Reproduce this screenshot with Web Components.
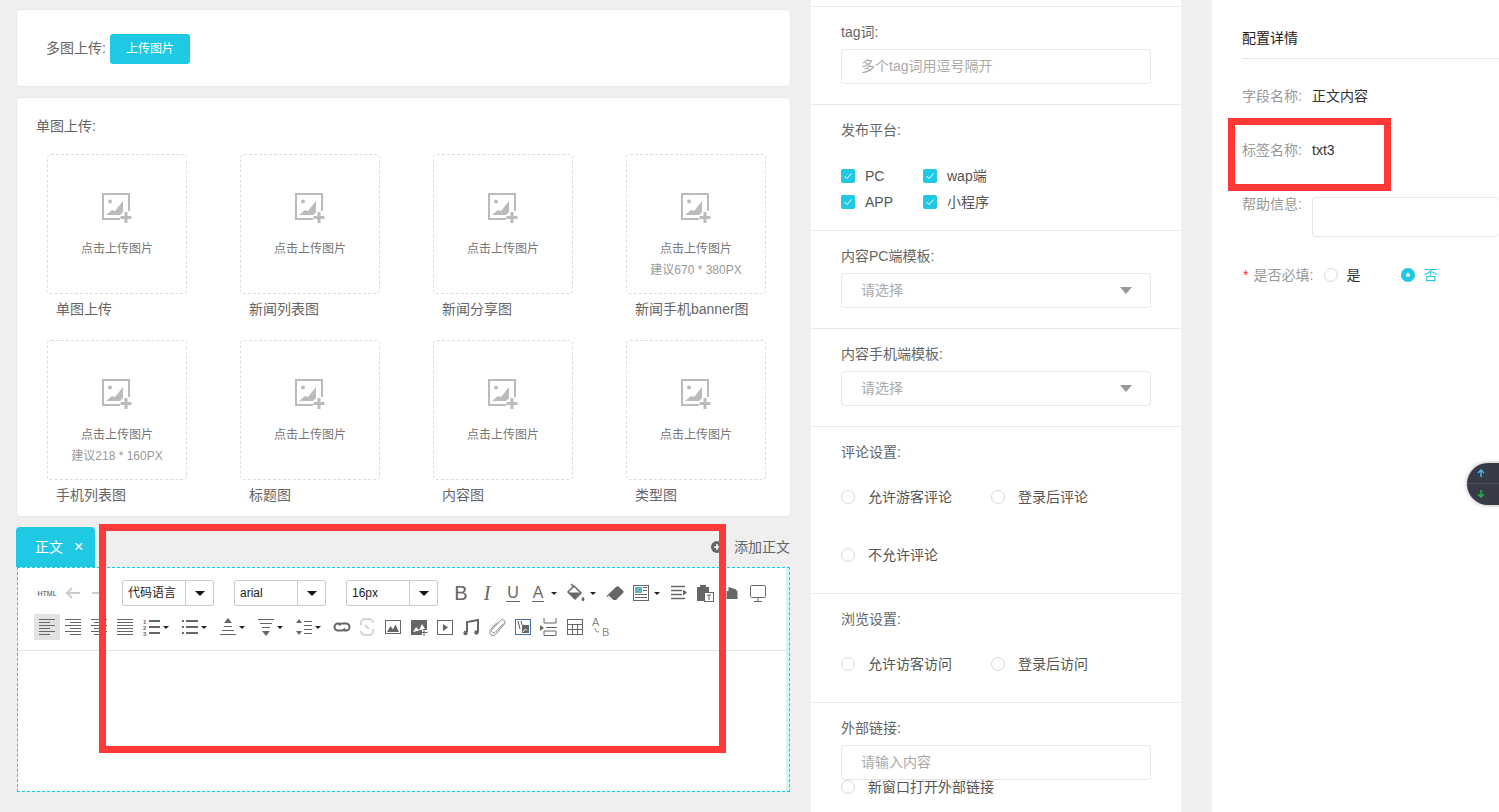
<!DOCTYPE html>
<html lang="zh">
<head>
<meta charset="utf-8">
<title>内容配置</title>
<style>
  html, body { margin: 0; padding: 0; height: 812px; overflow: hidden; background: #efefef; }
  body { font-family: "Liberation Sans", "Noto Sans CJK SC", sans-serif; font-size: 14px; color: #666; }
</style>
</head>
<body>
<app-shell></app-shell>

<script>
const TEAL = "#1fc8e3";

// toolbar icons, 20x20 box
const l = (y, a, b) => `<path d="M${a} ${y}H${b}"/>`;
const ICONS = {
  back: `<path d="M17 10H4M9 5l-5 5 5 5" stroke="#ccc" stroke-width="2"/>`,
  forward: `<path d="M3 10h13M11 5l5 5-5 5" stroke="#ccc" stroke-width="2"/>`,
  fill: `<path d="M5 1l3 3" stroke-width="1.5"/><path d="M8 3l7 7-6 6-7-7z" stroke-width="1.5"/><path d="M2.500 9.500h12l-5.500 6z" fill="#666" stroke="none"/><path d="M17 13.500c1 1.500 1.500 2.200 1.500 3a1.500 1.500 0 0 1-3 0c0-.8.500-1.500 1.500-3z" fill="#666" stroke="none"/>`,
  eraser: `<path d="M1.500 13l9.500-9c1-1 2-1 3 0l4 3.500c.8.800.8 1.700 0 2.500L11 17H6z" fill="#666" stroke="none"/><path d="M3.500 12.500l5 4.500H6l-3.500-3.200z" fill="#fff" stroke="none"/>`,
  imagetext: `<rect x="2.500" y="2.500" width="15" height="15"/><rect x="4" y="4" width="7" height="6" fill="#5fb8bf" stroke="none"/>${l(4.5,12,16)}${l(7.5,12,16)}${l(11.5,4,16)}${l(14.5,4,16)}`,
  rowtext: `<g stroke-width="1.500">${l(3.5,2,16)}${l(7.5,2,13)}${l(11.5,2,13)}${l(15.5,2,16)}</g><path d="M14 6.500l4 3-4 3z" fill="#666" stroke="none"/>`,
  paste: `<path d="M2 4h3V2h6v2h3v6H9v8H2z" fill="#666" stroke="none"/><rect x="9.500" y="9.500" width="9" height="9" fill="#fff"/><path d="M12 12h4M14 12v5"/>`,
  cut: `<path d="M4.500 8h11v8h-11z" fill="#666" stroke="none"/><path d="M6.500 4l8 2.500V8h-8z" fill="#666" stroke="none"/>`,
  monitor: `<rect x="2.500" y="2.500" width="15" height="12" rx="1"/><path d="M10 15v3M6 18.500h8"/>`,
  left: `${l(2.5,2,18)}${l(5.5,2,13)}${l(8.5,2,18)}${l(11.5,2,13)}${l(14.5,2,18)}${l(17.5,2,13)}`,
  right: `${l(2.5,2,18)}${l(5.5,7,18)}${l(8.5,2,18)}${l(11.5,7,18)}${l(14.5,2,18)}${l(17.5,7,18)}`,
  center: `${l(2.5,2,18)}${l(5.5,5,15)}${l(8.5,2,18)}${l(11.5,5,15)}${l(14.5,2,18)}${l(17.5,5,15)}`,
  justify: `${l(2.5,2,18)}${l(5.5,2,18)}${l(8.5,2,18)}${l(11.5,2,18)}${l(14.5,2,18)}${l(17.5,2,18)}`,
  ol: `<text x="1" y="7" font-size="6" font-weight="700" fill="#666" stroke="none">1</text><text x="1" y="13" font-size="6" font-weight="700" fill="#666" stroke="none">2</text><text x="1" y="19" font-size="6" font-weight="700" fill="#666" stroke="none">3</text><g stroke-width="2">${l(4,7,18)}${l(10,7,18)}${l(16,7,18)}</g>`,
  ul: `<g stroke-width="2">${l(4,2,4)}${l(10,2,4)}${l(16,2,4)}${l(4,6,18)}${l(10,6,18)}${l(16,6,18)}</g>`,
  spaceup: `<path d="M10 1l4 5H6z" fill="#666" stroke="none"/>${l(9.5,6,14)}${l(13.5,4,16)}${l(17.5,2,18)}`,
  spacedown: `${l(2.5,2,18)}${l(6.5,4,16)}${l(10.5,6,14)}<path d="M10 19l4-5H6z" fill="#666" stroke="none"/>`,
  lineheight: `<path d="M5 2l3 4H2zM5 18l3-4H2z" fill="#666" stroke="none"/>${l(4.5,10,18)}${l(8.5,10,18)}${l(12.5,10,18)}${l(16.5,10,18)}`,
  link: `<g stroke-width="2"><path d="M8 6.500H6a3.500 3.500 0 0 0 0 7h4c1.500 0 2.500-.8 3-2"/><path d="M12 13.500h2a3.500 3.500 0 0 0 0-7h-4c-1.500 0-2.500.8-3 2"/></g>`,
  unlink: `<g stroke="#d4d4d4" stroke-width="2"><path d="M4 8V6a4 4 0 0 1 4-4h4a4 4 0 0 1 4 4"/><path d="M16 12v2a4 4 0 0 1-4 4H8a4 4 0 0 1-4-4"/><path d="M8 8l4 4"/></g>`,
  image: `<rect x="2.500" y="3.500" width="15" height="13"/><path d="M4 15l3.500-6 2.500 3.500 2.500-5 3.500 7.500z" fill="#666" stroke="none"/>`,
  imageadd: `<path d="M2 3h16v10h-5v5H2z" fill="#666" stroke="none"/><path d="M4 15l3-5 3 3 3-6 3 5" fill="#fff" stroke="none"/><path d="M15 12v7M11.500 15.500h7"/>`,
  video: `<rect x="2.500" y="3.500" width="15" height="14"/><path d="M8 7l5 3.500-5 3.500z" fill="#666" stroke="none"/>`,
  music: `<path d="M6 15V5l11-2v12" stroke-width="2"/><circle cx="4.500" cy="16" r="2.200" fill="#666" stroke="none"/><circle cx="15.500" cy="15.500" r="2.200" fill="#666" stroke="none"/>`,
  clip: `<path d="M16.500 6.500L8 15.500c-1.500 1.500-4.500-1-3-3l8.500-9c2.500-2.500 6 1 4 3.500L8.500 17.500c-3 3-8-1.500-5-5L10 5.500" stroke="#888"/>`,
  gallery: `<rect x="2.500" y="2.500" width="15" height="15" stroke="#3f6fae"/><path d="M5 4l2 8M8 4l1 4"  stroke="#555"/><path d="M9 8h7v8H9z" fill="#666" stroke="none"/><path d="M10 15l2.500-3 1.500 1.500" stroke="#fff" fill="none"/>`,
  pagebreak: `<path d="M5 1v5h12V1"/><path d="M1 8l4 3-4 3z" fill="#666" stroke="none"/>${l(10.5,7,18)}<path d="M5 18.500v-4.500h12v4.500z"/>`,
  table: `<rect x="2.500" y="2.500" width="15" height="15"/><path d="M2.500 7.500h15M2.500 12.500h15M7.500 7.500v10M12.500 7.500v10"/>`,
  translate: `<text x="1" y="9" font-size="11" fill="#888" stroke="none">A</text><text x="11" y="19" font-size="11" fill="#888" stroke="none">B</text><path d="M4 11c0 3 1.500 4 4 4" stroke="#888"/>`
};

class ToolBtn extends HTMLElement {
  constructor() {
    super();
    this.attachShadow({ mode: "open" });
  }

  connectedCallback() {
    const w = this.getAttribute("w") || 26;
    const iw = this.getAttribute("iw") || w;
    const pl = this.getAttribute("pl") || 0;
    const cm = this.getAttribute("cm") || -1;
    const icon = ICONS[this.getAttribute("icon")];
    const caret = this.hasAttribute("caret")
      ? `<i class="caret" style="margin-left:${cm}px"></i>` : "";
    this.shadowRoot.innerHTML = `
      <style>
        :host { display: flex; align-items: center; height: 26px; flex: none; }
        :host([active]) { background: #e2e2e2; }
        .ico { display: flex; align-items: center; justify-content: center; height: 26px; flex: none; }
        svg { display: block; fill: none; stroke: #666; stroke-width: 1; font-family: "Liberation Sans", sans-serif; }
        .caret { flex: none; width: 0; height: 0; margin-top: 1px; border: 3px solid transparent; border-bottom: 0; border-top-color: #222; }
      </style>
      <div class="ico" style="width:${iw}px;margin-left:${pl}px">
        ${icon ? `<svg width="20" height="20" viewBox="0 0 20 20">${icon}</svg>` : "<slot></slot>"}
      </div>
      ${caret}
    `;
    this.style.width = w + "px";
  }
}

class EdSelect extends HTMLElement {
  constructor() {
    super();
    this.attachShadow({ mode: "open" });
    this.shadowRoot.innerHTML = `
      <style>
        :host { display: flex; width: 92px; height: 26px; box-sizing: border-box; border: 1px solid #ccc; border-radius: 2px; flex: none; background: #fff; }
        .val { flex: 1; padding-left: 5px; font-size: 12px; line-height: 24px; color: #222; white-space: nowrap; overflow: hidden; }
        .arrow { width: 27px; border-left: 1px solid #ccc; display: flex; align-items: center; justify-content: center; }
        .arrow i { width: 0; height: 0; border: 5px solid transparent; border-bottom: 0; border-top: 5px solid #111; }
      </style>
      <div class="val"><slot></slot></div>
      <div class="arrow"><i></i></div>
    `;
  }
}

class EditorBox extends HTMLElement {
  constructor() {
    super();
    this.attachShadow({ mode: "open" });
    this.shadowRoot.innerHTML = `
      <style>
        :host { display: block; height: 225px; margin-left: 1px; width: 773px; box-sizing: border-box; border: 1px dashed ${TEAL}; background: #d6f4f8; }
        .inner { background: #fff; height: 100%; margin-right: 3px; box-sizing: border-box; border-bottom-right-radius: 4px; }
        .bar { padding: 12px 0 10px 16px; border-bottom: 1px solid #e4e4e4; }
        .row { display: flex; align-items: center; height: 26px; }
        .row + .row { margin-top: 8px; }
        .html { font-size: 7px; color: #444; }
        .mr20 { margin-right: 20px; }
        .ml10 { margin-left: 10px; }
        .txt { font-size: 20px; color: #666; line-height: 26px; }
        .u { font-size: 16px; line-height: 16px; border-bottom: 1px solid #666; padding: 0 1px; }
        ed-select:first-of-type { margin-left: 10px; }
      </style>
      <div class="inner">
        <div class="bar">
          <div class="row">
            <tool-btn><span class="html">HTML</span></tool-btn>
            <tool-btn icon="back"></tool-btn>
            <tool-btn icon="forward"></tool-btn>
            <ed-select class="mr20">代码语言</ed-select>
            <ed-select class="mr20">arial</ed-select>
            <ed-select>16px</ed-select>
            <tool-btn class="ml10"><span class="txt">B</span></tool-btn>
            <tool-btn><span class="txt" style="font-family:'Liberation Serif',serif;font-style:italic">I</span></tool-btn>
            <tool-btn><span class="u">U</span></tool-btn>
            <tool-btn w="37" iw="24" cm="1" caret><span class="u">A</span></tool-btn>
            <tool-btn icon="fill" w="39" iw="26" cm="1" caret></tool-btn>
            <tool-btn icon="eraser"></tool-btn>
            <tool-btn icon="imagetext" w="37" iw="26" cm="0" caret></tool-btn>
            <tool-btn icon="rowtext" w="27"></tool-btn>
            <tool-btn icon="paste"></tool-btn>
            <tool-btn icon="cut" w="27"></tool-btn>
            <tool-btn icon="monitor"></tool-btn>
          </div>
          <div class="row">
            <tool-btn icon="left" active></tool-btn>
            <tool-btn icon="right"></tool-btn>
            <tool-btn icon="center"></tool-btn>
            <tool-btn icon="justify"></tool-btn>
            <tool-btn icon="ol" w="39" iw="24" pl="2" caret></tool-btn>
            <tool-btn icon="ul" w="39" iw="24" pl="1" caret></tool-btn>
            <tool-btn icon="spaceup" w="38" iw="24" caret></tool-btn>
            <tool-btn icon="spacedown" w="38" iw="24" caret></tool-btn>
            <tool-btn icon="lineheight" w="37" iw="24" caret></tool-btn>
            <tool-btn icon="link" w="25"></tool-btn>
            <tool-btn icon="unlink"></tool-btn>
            <tool-btn icon="image"></tool-btn>
            <tool-btn icon="imageadd"></tool-btn>
            <tool-btn icon="video"></tool-btn>
            <tool-btn icon="music"></tool-btn>
            <tool-btn icon="clip"></tool-btn>
            <tool-btn icon="gallery"></tool-btn>
            <tool-btn icon="pagebreak"></tool-btn>
            <tool-btn icon="table"></tool-btn>
            <tool-btn icon="translate"></tool-btn>
          </div>
        </div>
      </div>
    `;
  }
}

class UploadTile extends HTMLElement {
  constructor() {
    super();
    this.attachShadow({ mode: "open" });
  }

  connectedCallback() {
    const hint = this.getAttribute("hint");
    this.shadowRoot.innerHTML = `
      <style>
        :host { display: block; width: 193px; }
        .box { width: 140px; height: 140px; box-sizing: border-box; border: 1px dashed #ddd; border-radius: 4px; padding-top: 38px; display: flex; flex-direction: column; align-items: center; }
        svg { display: block; }
        .txt { margin-top: 17px; font-size: 12px; line-height: 18px; color: #777; }
        .hint { margin-top: 3px; font-size: 12px; line-height: 18px; color: #999; }
        .cap { margin: 5px 0 0 9px; font-size: 14px; line-height: 20px; color: #666; white-space: nowrap; }
      </style>
      <div class="box">
        <svg width="30" height="30" viewBox="0 0 30 30">
          <path d="M18 26H1V1h26v17" fill="none" stroke="#bbb" stroke-width="2"/>
          <circle cx="8" cy="8.500" r="2" fill="#bbb"/>
          <path d="M4 22l6-5 3 1 8-10v11l-3 3z" fill="#bbb"/>
          <path d="M24 19v11M18.500 24.500h11" stroke="#bbb" stroke-width="3"/>
        </svg>
        <div class="txt">点击上传图片</div>
        ${hint ? `<div class="hint">${hint}</div>` : ""}
      </div>
      <div class="cap"><slot></slot></div>
    `;
  }
}

class UiCard extends HTMLElement {
  constructor() {
    super();
    this.attachShadow({ mode: "open" });
    this.shadowRoot.innerHTML = `
      <style>
        :host { display: block; box-sizing: border-box; background: #fff; border: 1px solid #e8e8e8; border-radius: 4px; }
      </style>
      <slot></slot>
    `;
  }
}

class FormSection extends HTMLElement {
  constructor() {
    super();
    this.attachShadow({ mode: "open" });
  }

  connectedCallback() {
    this.shadowRoot.innerHTML = `
      <style>
        :host { display: block; box-sizing: border-box; height: ${this.getAttribute("h")}px; border-top: 1px solid #e8e8e8; padding: 15px 30px 0; }
        .lab { font-size: 14px; line-height: 20px; color: #666; white-space: nowrap; }
      </style>
      <div class="lab">${this.getAttribute("label")}</div>
      <slot></slot>
    `;
  }
}

class FakeInput extends HTMLElement {
  constructor() {
    super();
    this.attachShadow({ mode: "open" });
  }

  connectedCallback() {
    const arrow = this.hasAttribute("select") ? "<i></i>" : "";
    this.shadowRoot.innerHTML = `
      <style>
        :host { display: flex; align-items: center; justify-content: space-between; box-sizing: border-box; width: 310px; height: 35px; margin-top: 7px; padding: 0 18px 2px 19px; border: 1px solid #e6e6e6; border-radius: 4px; font-size: 14px; line-height: 20px; color: #aaa; background: #fff; }
        span { display: block; }
        i { width: 0; height: 0; margin-top: 2px; border: 6px solid transparent; border-bottom: 0; border-top: 7px solid #999; }
      </style>
      <span><slot></slot></span>${arrow}
    `;
  }
}

class CheckOpt extends HTMLElement {
  constructor() {
    super();
    this.attachShadow({ mode: "open" });
    this.shadowRoot.innerHTML = `
      <style>
        :host { display: flex; align-items: center; width: 82px; height: 26px; font-size: 14px; line-height: 20px; color: #555; white-space: nowrap; }
        .box { width: 14px; height: 14px; border-radius: 2px; background: ${TEAL}; margin-right: 10px; flex: none; }
        svg { display: block; }
      </style>
      <div class="box"><svg width="14" height="14" viewBox="0 0 14 14"><path d="M3.500 7l2.500 2.500 4.500-5" fill="none" stroke="#fff"/></svg></div>
      <slot></slot>
    `;
  }
}

class RadioOpt extends HTMLElement {
  constructor() {
    super();
    this.attachShadow({ mode: "open" });
    this.shadowRoot.innerHTML = `
      <style>
        :host { display: inline-flex; align-items: center; width: var(--w, 150px); height: 20px; font-size: 14px; line-height: 20px; color: var(--c, #555); white-space: nowrap; }
        :host([checked]) { color: ${TEAL}; }
        .dot { box-sizing: border-box; width: 14px; height: 14px; margin-left: var(--ml, 0); margin-right: var(--gap, 13px); border-radius: 50%; border: 1px solid #d8d8de; background: #fff; flex: none; }
        :host([checked]) .dot { border: 5px solid ${TEAL}; }
      </style>
      <div class="dot"></div>
      <slot></slot>
    `;
  }
}

class DetailRow extends HTMLElement {
  constructor() {
    super();
    this.attachShadow({ mode: "open" });
  }

  connectedCallback() {
    this.shadowRoot.innerHTML = `
      <style>
        :host { display: flex; align-items: flex-start; font-size: 14px; line-height: 20px; color: #333; margin-top: var(--mt, 0); }
        .k { width: 70px; flex: none; color: #999; white-space: nowrap; }
      </style>
      <div class="k">${this.getAttribute("label")}</div>
      <slot></slot>
    `;
  }
}

// red annotation frames drawn over the shot
class MarkBox extends HTMLElement {
  constructor() {
    super();
    this.attachShadow({ mode: "open" });
    this.shadowRoot.innerHTML = `
      <style>
        :host { display: block; position: absolute; box-sizing: border-box; border: 7px solid #ff3838; pointer-events: none; }
      </style>
    `;
  }
}

class ScrollDock extends HTMLElement {
  constructor() {
    super();
    this.attachShadow({ mode: "open" });
    this.shadowRoot.innerHTML = `
      <style>
        :host { display: block; position: absolute; left: 1467px; top: 463px; width: 40px; height: 42px; box-sizing: border-box; background: #363b46; border-radius: 21px 0 0 21px; box-shadow: 0 0 4px rgba(0,0,0,.35); }
        svg { display: block; }
        .line { height: 1px; background: #4b505b; }
        .cell { height: 20px; padding-left: 10px; display: flex; align-items: center; }
      </style>
      <div class="cell"><svg width="8" height="8" viewBox="0 0 8 8"><path d="M4 8V1M1 4l3-3 3 3" fill="none" stroke="#4db2f0" stroke-width="1.500"/></svg></div>
      <div class="line"></div>
      <div class="cell"><svg width="8" height="8" viewBox="0 0 8 8"><path d="M4 0v7M1 4l3 3 3-3" fill="none" stroke="#2fb24a" stroke-width="1.500"/></svg></div>
    `;
  }
}

class AppShell extends HTMLElement {
  constructor() {
    super();
    this.attachShadow({ mode: "open" });
    this.shadowRoot.innerHTML = `
      <style>
        :host { display: flex; position: relative; width: 1499px; height: 812px; overflow: hidden; font-family: "Liberation Sans", "Noto Sans CJK SC", sans-serif; }
        .left { width: 775px; margin: 9px 0 0 16px; flex: none; }
        .multi { height: 78px; display: flex; align-items: center; padding-left: 29px; margin-bottom: 10px; line-height: 20px; }
        .upbtn { width: 80px; height: 30px; margin: 2px 0 0 4px; border-radius: 3px; background: ${TEAL}; color: #fff; font-size: 12px; line-height: 30px; text-align: center; }
        .single { height: 420px; padding: 18px 0 0 19px; margin-bottom: 10px; }
        .single .t { line-height: 20px; }
        .grid { display: grid; grid-template-columns: repeat(4, 193px); row-gap: 21px; margin: 18px 0 0 11px; }
        .tabs { display: flex; align-items: center; justify-content: space-between; height: 40px; }
        .tab { display: flex; align-items: center; box-sizing: border-box; width: 79px; height: 40px; padding-left: 19px; background: ${TEAL}; color: #fff; border-radius: 4px 4px 0 0; font-size: 14px; line-height: 20px; }
        .tab b { font-weight: 400; margin-left: 11px; font-size: 16px; }
        .add { display: flex; align-items: center; color: #666; font-size: 14px; line-height: 20px; margin-right: 1px; }
        .add svg { margin-right: 11px; display: block; }
        .mid { width: 370px; margin-left: 20px; background: #fff; flex: none; height: 812px; }
        .gap { height: 6px; }
        .checks { display: grid; grid-template-columns: 82px 82px; margin-top: 23px; }
        .radios { margin-top: 25px; display: flex; flex-wrap: wrap; row-gap: 38px; }
        .right { width: 287px; margin-left: 31px; background: #fff; flex: none; height: 812px; padding-left: 30px; box-sizing: border-box; }
        h3 { margin: 0; height: 59px; box-sizing: border-box; padding-top: 28px; font-size: 14px; font-weight: 400; line-height: 20px; color: #222; border-bottom: 1px solid #e6e6e6; }
        .area { height: 40px; box-sizing: border-box; border: 1px solid #e6e6e6; border-radius: 4px; border-right: 0; margin-top: 3px; flex: 1; }
        .req { display: flex; align-items: center; height: 20px; line-height: 20px; margin-top: 28px; color: #999; padding-left: 1px; white-space: nowrap; --w: 77px; --gap: 8px; --ml: 1px; --c: #333; }
        .req em { color: #f33; font-style: normal; margin-right: 5px; }
        .req span { width: 70px; flex: none; }
      </style>
      <div class="left">
        <ui-card class="multi">多图上传:<div class="upbtn">上传图片</div></ui-card>
        <ui-card class="single">
          <div class="t">单图上传:</div>
          <div class="grid">
            <upload-tile>单图上传</upload-tile>
            <upload-tile>新闻列表图</upload-tile>
            <upload-tile>新闻分享图</upload-tile>
            <upload-tile hint="建议670 * 380PX">新闻手机banner图</upload-tile>
            <upload-tile hint="建议218 * 160PX">手机列表图</upload-tile>
            <upload-tile>标题图</upload-tile>
            <upload-tile>内容图</upload-tile>
            <upload-tile>类型图</upload-tile>
          </div>
        </ui-card>
        <div class="tabs">
          <div class="tab">正文<b>×</b></div>
          <div class="add">
            <svg width="12" height="12" viewBox="0 0 12 12"><circle cx="6" cy="6" r="6" fill="#666"/><path d="M6 3v6M3 6h6" stroke="#fff" stroke-width="1.500"/></svg>
            添加正文
          </div>
        </div>
        <editor-box></editor-box>
      </div>

      <div class="mid">
        <div class="gap"></div>
        <form-section label="tag词:" h="98"><fake-input>多个tag词用逗号隔开</fake-input></form-section>
        <form-section label="发布平台:" h="126">
          <div class="checks">
            <check-opt>PC</check-opt><check-opt>wap端</check-opt>
            <check-opt>APP</check-opt><check-opt>小程序</check-opt>
          </div>
        </form-section>
        <form-section label="内容PC端模板:" h="98"><fake-input select>请选择</fake-input></form-section>
        <form-section label="内容手机端模板:" h="98"><fake-input select>请选择</fake-input></form-section>
        <form-section label="评论设置:" h="167">
          <div class="radios">
            <radio-opt>允许游客评论</radio-opt><radio-opt>登录后评论</radio-opt>
            <radio-opt>不允许评论</radio-opt>
          </div>
        </form-section>
        <form-section label="浏览设置:" h="109">
          <div class="radios">
            <radio-opt>允许访客访问</radio-opt><radio-opt>登录后访问</radio-opt>
          </div>
        </form-section>
        <form-section label="外部链接:" h="110">
          <fake-input>请输入内容</fake-input>
          <radio-opt style="margin-top:-3px;display:flex;width:auto">新窗口打开外部链接</radio-opt>
        </form-section>
      </div>

      <div class="right">
        <h3>配置详情</h3>
        <detail-row label="字段名称:" style="--mt:27px">正文内容</detail-row>
        <detail-row label="标签名称:" style="--mt:34px">txt3</detail-row>
        <detail-row label="帮助信息:" style="--mt:34px"><div class="area"></div></detail-row>
        <div class="req"><em>*</em><span>是否必填:</span><radio-opt>是</radio-opt><radio-opt checked>否</radio-opt></div>
      </div>

      <mark-box style="left:99px;top:524px;width:627px;height:229px"></mark-box>
      <mark-box style="left:1228px;top:118px;width:163px;height:73px"></mark-box>
      <scroll-dock></scroll-dock>
    `;
  }
}

customElements.define("tool-btn", ToolBtn);
customElements.define("ed-select", EdSelect);
customElements.define("editor-box", EditorBox);
customElements.define("upload-tile", UploadTile);
customElements.define("ui-card", UiCard);
customElements.define("form-section", FormSection);
customElements.define("fake-input", FakeInput);
customElements.define("check-opt", CheckOpt);
customElements.define("radio-opt", RadioOpt);
customElements.define("detail-row", DetailRow);
customElements.define("mark-box", MarkBox);
customElements.define("scroll-dock", ScrollDock);
customElements.define("app-shell", AppShell);
</script>
</body>
</html>
